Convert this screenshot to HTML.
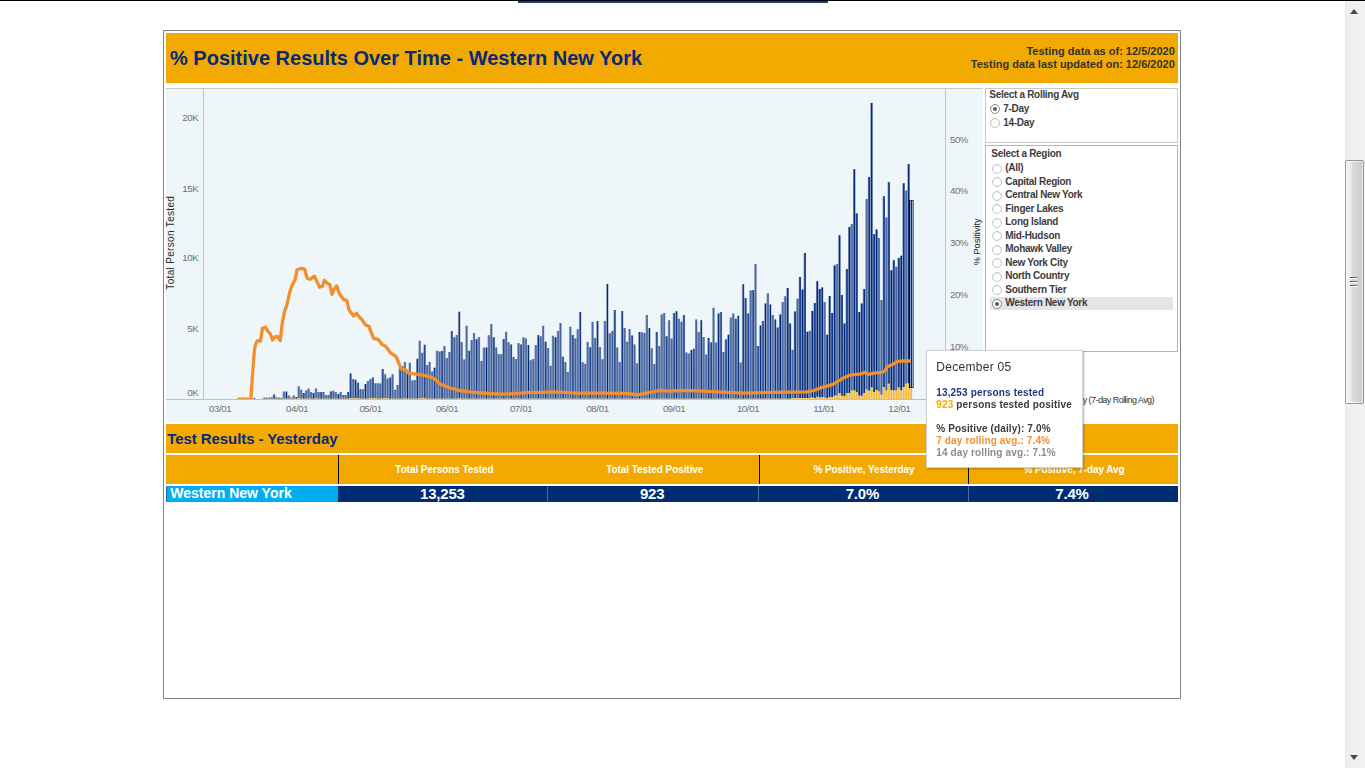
<!DOCTYPE html>
<html lang="en">
<head>
<meta charset="utf-8">
<title>% Positive Results Over Time - Western New York</title>
<style>
html,body{margin:0;padding:0;background:#fff;overflow:hidden;}
body{width:1365px;height:768px;position:relative;font-family:"Liberation Sans",Arial,Helvetica,sans-serif;color:#333;}
.abs{position:absolute;}
.t{position:absolute;white-space:nowrap;margin:0;padding:0;}
#topline{left:0;top:0;width:1365px;height:1px;background:#000;}
#topblue{left:518px;top:1px;width:310px;height:2px;background:#1f3a7a;}
#frame{left:163px;top:30px;width:1016px;height:667px;border:1px solid #848484;}
#hdr{left:166px;top:33px;width:1012px;height:50px;background:#f2a900;}
#chartbg{left:166px;top:88px;width:817px;height:334px;background:#eef6fa;}
#chartsvg{left:0;top:0;}
.panel{border:1px solid #c8c8c8;background:#fff;box-sizing:border-box;}
.radio{position:absolute;width:8px;height:8px;border:1px solid #c4c4c4;border-radius:50%;background:#fff;box-shadow:inset 0 1px 1px rgba(0,0,0,0.08);}
.radio.on{border-color:#8a8a8a;}
.radio.on:after{content:"";position:absolute;left:2px;top:2px;width:4px;height:4px;border-radius:50%;background:#5e5a55;}
#bar2{left:166px;top:424px;width:1012px;height:29px;background:#f2a900;}
#thead{left:166px;top:455px;width:1012px;height:29px;background:#f2a900;}
.vsep{position:absolute;top:455px;width:1px;height:29px;background:#000;}
#rowname{left:166px;top:486px;width:172px;height:16px;background:#00aeef;border-left:1px solid #1b6f9c;box-sizing:border-box;}
#rowvals{left:338px;top:486px;width:840px;height:16px;background:#002d72;}
.tsep{position:absolute;top:486px;width:1px;height:16px;background:#4f6597;}
#tiptext{position:absolute;left:0;top:0;width:1365px;height:768px;will-change:transform;}
#sb{left:1345px;top:1px;width:20px;height:767px;background:linear-gradient(to right,#e9e9e9 0,#efefef 2px,#f1f1f1 100%);}
#sbthumb{left:1345px;top:160px;width:19px;height:244px;box-sizing:border-box;border:1px solid #979797;border-radius:2px;background:linear-gradient(to right,#f6f6f6 0,#eeeeee 3px,#e6e6e6 6px,#d9dadc 6.5px,#d4d4d8 11px,#cbcbcf 16px,#d6d6da 17px);box-shadow:inset 0 0 0 1px rgba(255,255,255,0.55);}
.grip{position:absolute;left:1350px;width:8px;height:1px;background:linear-gradient(to right,#3f3f3f,#8f8f8f);box-shadow:0 1px 0 rgba(255,255,255,0.9);}
.arr{position:absolute;left:1350px;width:0;height:0;border-left:4.5px solid transparent;border-right:4.5px solid transparent;}
#tip{left:926px;top:350px;width:157px;height:118px;box-sizing:border-box;background:#fff;border:1px solid #d2d2d2;box-shadow:1px 1px 2px rgba(0,0,0,0.28);}
</style>
</head>
<body>
<div id="frame" class="abs"></div>
<div id="hdr" class="abs"></div>
<div class="t" style="top:44.02px;font-size:21px;line-height:27px;color:#07297a;font-weight:bold;left:169.50px;transform:scaleX(0.9524);transform-origin:0 50%;">% Positive Results Over Time - Western New York</div>
<div class="t" style="top:44.09px;font-size:11px;line-height:14px;color:#333;font-weight:bold;right:190.20px;text-align:right;">Testing data as of: 12/5/2020</div>
<div class="t" style="top:57.09px;font-size:11px;line-height:14px;color:#333;font-weight:bold;right:190.20px;text-align:right;">Testing data last updated on: 12/6/2020</div>

<div id="chartbg" class="abs"></div>
<svg id="chartsvg" class="abs" width="1365" height="768" viewBox="0 0 1365 768">
<g fill="#e8dcdc" fill-opacity="0.13"><rect x="204" y="119" width="741" height="1"/><rect x="204" y="189" width="741" height="1"/></g>
<g>
<path fill="#00297a" fill-opacity="0.47" d="M253.04 398.2h2.4V399.0h-2.4zM262.91 397.7h2.4V398.8h-2.4zM265.38 397.8h2.4V398.8h-2.4zM267.85 397.7h2.4V398.8h-2.4zM270.32 397.2h2.4V398.8h-2.4zM272.79 394.6h2.4V398.8h-2.4zM275.26 397.2h2.4V398.8h-2.4zM277.73 397.7h2.4V398.8h-2.4zM280.20 397.7h2.4V398.8h-2.4zM282.66 391.5h2.4V398.8h-2.4zM285.13 391.5h2.4V398.8h-2.4zM287.60 395.5h2.4V398.8h-2.4zM290.07 397.5h2.4V398.8h-2.4zM292.54 395.5h2.4V398.8h-2.4zM295.01 397.0h2.4V398.8h-2.4zM297.48 386.3h2.4V398.2h-2.4zM299.95 389.8h2.4V398.8h-2.4zM302.42 392.9h2.4V398.8h-2.4zM304.89 390.6h2.4V398.8h-2.4zM307.36 388.5h2.4V398.8h-2.4zM309.82 392.0h2.4V398.8h-2.4zM312.29 392.9h2.4V398.8h-2.4zM314.76 388.5h2.4V398.2h-2.4zM317.23 392.0h2.4V398.8h-2.4zM319.70 392.0h2.4V398.8h-2.4zM322.17 392.0h2.4V398.8h-2.4zM324.64 395.0h2.4V398.8h-2.4zM327.11 395.0h2.4V398.8h-2.4zM329.58 391.5h2.4V398.8h-2.4zM332.04 390.7h2.4V398.8h-2.4zM334.51 392.0h2.4V398.8h-2.4zM336.98 394.0h2.4V398.8h-2.4zM339.45 392.0h2.4V398.8h-2.4zM341.92 395.0h2.4V398.8h-2.4zM344.39 395.0h2.4V398.8h-2.4zM346.86 392.0h2.4V398.8h-2.4zM349.33 373.5h2.4V398.2h-2.4zM351.80 379.0h2.4V398.2h-2.4zM354.27 379.7h2.4V398.2h-2.4zM356.74 382.8h2.4V398.2h-2.4zM359.20 389.0h2.4V398.8h-2.4zM361.67 389.2h2.4V398.8h-2.4zM364.14 383.9h2.4V398.8h-2.4zM366.61 380.9h2.4V398.8h-2.4zM369.08 379.2h2.4V398.2h-2.4zM371.55 377.4h2.4V398.2h-2.4zM374.02 383.3h2.4V398.2h-2.4zM376.49 383.3h2.4V398.8h-2.4zM378.96 383.6h2.4V398.8h-2.4zM381.42 368.9h2.4V398.2h-2.4zM383.89 374.3h2.4V398.2h-2.4zM386.36 378.6h2.4V398.2h-2.4zM388.83 377.4h2.4V398.8h-2.4zM391.30 374.3h2.4V398.8h-2.4zM393.77 389.7h2.4V398.8h-2.4zM396.24 385.0h2.4V398.8h-2.4zM398.71 368.1h2.4V398.8h-2.4zM401.18 366.3h2.4V398.8h-2.4zM403.65 362.0h2.4V398.2h-2.4zM406.12 372.2h2.4V398.8h-2.4zM408.58 362.8h2.4V398.8h-2.4zM411.05 380.4h2.4V398.8h-2.4zM413.52 380.1h2.4V398.8h-2.4zM415.99 358.7h2.4V398.8h-2.4zM418.46 340.7h2.4V398.2h-2.4zM420.93 352.8h2.4V398.2h-2.4zM423.40 344.8h2.4V398.2h-2.4zM425.87 364.9h2.4V398.8h-2.4zM428.34 362.0h2.4V398.8h-2.4zM430.80 371.6h2.4V398.8h-2.4zM433.27 367.8h2.4V398.8h-2.4zM435.74 350.7h2.4V398.8h-2.4zM438.21 351.6h2.4V398.8h-2.4zM440.68 351.1h2.4V398.8h-2.4zM443.15 346.0h2.4V398.8h-2.4zM445.62 358.1h2.4V398.8h-2.4zM448.09 352.0h2.4V398.8h-2.4zM450.56 331.1h2.4V398.8h-2.4zM453.03 337.2h2.4V398.8h-2.4zM455.50 334.9h2.4V398.8h-2.4zM457.96 311.8h2.4V398.2h-2.4zM460.43 341.9h2.4V398.8h-2.4zM462.90 359.5h2.4V398.8h-2.4zM465.37 325.8h2.4V398.8h-2.4zM467.84 350.8h2.4V398.8h-2.4zM470.31 339.9h2.4V398.8h-2.4zM472.78 332.9h2.4V398.8h-2.4zM475.25 339.3h2.4V398.8h-2.4zM477.72 337.0h2.4V398.8h-2.4zM480.19 361.0h2.4V398.8h-2.4zM482.65 347.5h2.4V398.8h-2.4zM485.12 347.5h2.4V398.8h-2.4zM487.59 335.2h2.4V398.8h-2.4zM490.06 323.9h2.4V398.8h-2.4zM492.53 337.2h2.4V398.8h-2.4zM495.00 347.5h2.4V398.8h-2.4zM497.47 354.0h2.4V398.8h-2.4zM499.94 354.3h2.4V398.8h-2.4zM502.41 339.0h2.4V398.8h-2.4zM504.88 331.7h2.4V398.8h-2.4zM507.34 342.3h2.4V398.8h-2.4zM509.81 344.4h2.4V398.8h-2.4zM512.28 356.9h2.4V398.8h-2.4zM514.75 359.0h2.4V398.8h-2.4zM517.22 343.1h2.4V398.8h-2.4zM519.69 344.6h2.4V398.8h-2.4zM522.16 337.2h2.4V398.8h-2.4zM524.63 338.5h2.4V398.8h-2.4zM527.10 345.0h2.4V398.8h-2.4zM529.57 360.2h2.4V398.8h-2.4zM532.03 358.9h2.4V398.8h-2.4zM534.50 345.0h2.4V398.8h-2.4zM536.97 334.9h2.4V398.8h-2.4zM539.44 336.2h2.4V398.8h-2.4zM541.91 325.8h2.4V398.8h-2.4zM544.38 341.7h2.4V398.8h-2.4zM546.85 348.0h2.4V398.8h-2.4zM549.32 365.8h2.4V398.8h-2.4zM551.79 335.8h2.4V398.8h-2.4zM554.25 337.2h2.4V398.8h-2.4zM556.72 331.0h2.4V398.8h-2.4zM559.19 323.1h2.4V398.8h-2.4zM561.66 356.7h2.4V398.8h-2.4zM564.13 361.9h2.4V398.8h-2.4zM566.60 371.9h2.4V398.8h-2.4zM569.07 326.7h2.4V398.8h-2.4zM571.54 334.9h2.4V398.8h-2.4zM574.01 338.5h2.4V398.8h-2.4zM576.48 329.3h2.4V398.8h-2.4zM578.94 312.0h2.4V398.8h-2.4zM581.41 362.3h2.4V398.8h-2.4zM583.88 363.8h2.4V398.8h-2.4zM586.35 342.0h2.4V398.8h-2.4zM588.82 347.2h2.4V398.8h-2.4zM591.29 321.9h2.4V398.8h-2.4zM593.76 338.1h2.4V398.8h-2.4zM596.23 321.1h2.4V398.8h-2.4zM598.70 346.9h2.4V398.8h-2.4zM601.17 359.3h2.4V398.8h-2.4zM603.63 320.9h2.4V398.8h-2.4zM606.10 284.0h2.4V398.8h-2.4zM608.57 333.2h2.4V398.8h-2.4zM611.04 331.0h2.4V398.8h-2.4zM613.51 310.1h2.4V398.8h-2.4zM615.98 347.6h2.4V398.8h-2.4zM618.45 361.9h2.4V398.8h-2.4zM620.92 311.1h2.4V398.8h-2.4zM623.39 328.0h2.4V398.8h-2.4zM625.86 341.7h2.4V398.8h-2.4zM628.33 328.9h2.4V398.8h-2.4zM630.79 335.5h2.4V398.8h-2.4zM633.26 344.6h2.4V398.8h-2.4zM635.73 363.2h2.4V398.8h-2.4zM638.20 331.9h2.4V398.8h-2.4zM640.67 332.2h2.4V398.8h-2.4zM643.14 332.9h2.4V398.8h-2.4zM645.61 315.0h2.4V398.8h-2.4zM648.08 328.0h2.4V398.8h-2.4zM650.55 348.2h2.4V398.8h-2.4zM653.01 364.1h2.4V398.8h-2.4zM655.48 331.9h2.4V398.8h-2.4zM657.95 345.9h2.4V398.8h-2.4zM660.42 314.4h2.4V398.8h-2.4zM662.89 313.1h2.4V398.8h-2.4zM665.36 336.2h2.4V398.8h-2.4zM667.83 320.2h2.4V398.8h-2.4zM670.30 338.4h2.4V398.8h-2.4zM672.77 313.0h2.4V398.8h-2.4zM675.24 311.3h2.4V398.8h-2.4zM677.70 318.8h2.4V398.8h-2.4zM680.17 321.7h2.4V398.8h-2.4zM682.64 315.0h2.4V398.8h-2.4zM685.11 352.5h2.4V398.8h-2.4zM687.58 353.6h2.4V398.8h-2.4zM690.05 350.0h2.4V398.8h-2.4zM692.52 348.8h2.4V398.8h-2.4zM694.99 319.6h2.4V398.8h-2.4zM697.46 332.1h2.4V398.8h-2.4zM699.93 320.2h2.4V398.8h-2.4zM702.39 336.9h2.4V398.8h-2.4zM704.86 354.6h2.4V398.8h-2.4zM707.33 338.0h2.4V398.8h-2.4zM709.80 342.5h2.4V398.8h-2.4zM712.27 307.8h2.4V398.8h-2.4zM714.74 342.5h2.4V398.8h-2.4zM717.21 313.4h2.4V398.8h-2.4zM719.68 311.9h2.4V398.8h-2.4zM722.15 351.9h2.4V398.8h-2.4zM724.62 339.6h2.4V398.8h-2.4zM727.09 334.8h2.4V398.8h-2.4zM729.55 317.5h2.4V398.8h-2.4zM732.02 313.6h2.4V398.8h-2.4zM734.49 318.8h2.4V398.8h-2.4zM736.96 315.7h2.4V398.8h-2.4zM739.43 362.5h2.4V398.8h-2.4zM741.90 284.2h2.4V398.8h-2.4zM744.37 298.0h2.4V398.8h-2.4zM746.84 313.4h2.4V398.8h-2.4zM749.31 290.5h2.4V398.8h-2.4zM751.77 290.0h2.4V398.8h-2.4zM754.24 264.0h2.4V398.8h-2.4zM756.71 345.9h2.4V398.8h-2.4zM759.18 325.5h2.4V398.8h-2.4zM761.65 320.9h2.4V398.8h-2.4zM764.12 303.6h2.4V398.8h-2.4zM766.59 293.2h2.4V398.8h-2.4zM769.06 304.6h2.4V398.8h-2.4zM771.53 315.0h2.4V398.8h-2.4zM774.00 319.6h2.4V398.8h-2.4zM776.46 327.5h2.4V398.8h-2.4zM778.93 314.4h2.4V398.8h-2.4zM781.40 301.9h2.4V398.8h-2.4zM783.87 296.3h2.4V398.8h-2.4zM786.34 288.0h2.4V398.8h-2.4zM788.81 323.4h2.4V398.8h-2.4zM791.28 349.8h2.4V398.1h-2.4zM793.75 311.5h2.4V398.1h-2.4zM796.22 298.8h2.4V398.1h-2.4zM798.69 276.9h2.4V398.1h-2.4zM801.15 289.6h2.4V398.1h-2.4zM803.62 253.0h2.4V398.1h-2.4zM806.09 331.7h2.4V398.1h-2.4zM808.56 330.7h2.4V398.1h-2.4zM811.03 310.9h2.4V397.6h-2.4zM813.50 303.0h2.4V398.0h-2.4zM815.97 281.3h2.4V396.7h-2.4zM818.44 289.0h2.4V397.6h-2.4zM820.91 287.5h2.4V397.0h-2.4zM823.38 302.1h2.4V397.6h-2.4zM825.85 334.8h2.4V398.0h-2.4zM828.31 295.9h2.4V397.0h-2.4zM830.78 313.0h2.4V397.1h-2.4zM833.25 265.5h2.4V395.7h-2.4zM835.72 264.0h2.4V395.4h-2.4zM838.19 235.3h2.4V392.9h-2.4zM840.66 295.0h2.4V395.7h-2.4zM843.13 323.4h2.4V396.0h-2.4zM845.60 269.0h2.4V393.3h-2.4zM848.07 227.0h2.4V392.9h-2.4zM850.53 223.9h2.4V390.5h-2.4zM853.00 169.3h2.4V390.5h-2.4zM855.47 213.5h2.4V391.9h-2.4zM857.94 312.0h2.4V395.7h-2.4zM860.41 303.6h2.4V395.7h-2.4zM862.88 289.0h2.4V392.9h-2.4zM865.35 198.9h2.4V389.5h-2.4zM867.82 177.0h2.4V390.7h-2.4zM870.29 103.0h2.4V387.6h-2.4zM872.76 234.3h2.4V391.9h-2.4zM875.22 229.5h2.4V390.0h-2.4zM877.69 238.0h2.4V391.4h-2.4zM880.16 300.0h2.4V394.8h-2.4zM882.63 196.2h2.4V387.1h-2.4zM885.10 217.5h2.4V390.5h-2.4zM887.57 182.2h2.4V383.8h-2.4zM890.04 270.2h2.4V390.0h-2.4zM892.51 260.2h2.4V390.5h-2.4zM894.98 266.7h2.4V390.5h-2.4zM897.45 258.0h2.4V387.6h-2.4zM899.91 255.7h2.4V390.5h-2.4zM902.38 183.3h2.4V387.1h-2.4zM904.85 190.5h2.4V383.8h-2.4zM907.32 164.1h2.4V383.3h-2.4z"/>
<path fill="#00297a" fill-opacity="0.45" d="M271.12 397.2h1.2V398.8h-1.2zM276.06 397.2h1.2V398.8h-1.2zM281.00 397.7h1.2V398.8h-1.2zM283.46 391.5h1.2V398.8h-1.2zM288.40 395.5h1.2V398.8h-1.2zM290.87 397.5h1.2V398.8h-1.2zM293.34 395.5h1.2V398.8h-1.2zM298.28 386.3h1.2V398.2h-1.2zM300.75 389.8h1.2V398.8h-1.2zM305.69 390.6h1.2V398.8h-1.2zM308.15 388.5h1.2V398.8h-1.2zM310.62 392.0h1.2V398.8h-1.2zM315.56 388.5h1.2V398.2h-1.2zM318.03 392.0h1.2V398.8h-1.2zM322.97 392.0h1.2V398.8h-1.2zM325.44 395.0h1.2V398.8h-1.2zM327.91 395.0h1.2V398.8h-1.2zM332.84 390.7h1.2V398.8h-1.2zM335.31 392.0h1.2V398.8h-1.2zM340.25 392.0h1.2V398.8h-1.2zM342.72 395.0h1.2V398.8h-1.2zM345.19 395.0h1.2V398.8h-1.2zM352.60 379.0h1.2V398.2h-1.2zM360.00 389.0h1.2V398.8h-1.2zM362.47 389.2h1.2V398.8h-1.2zM367.41 380.9h1.2V398.8h-1.2zM369.88 379.2h1.2V398.2h-1.2zM374.82 383.3h1.2V398.2h-1.2zM377.29 383.3h1.2V398.8h-1.2zM379.76 383.6h1.2V398.8h-1.2zM384.69 374.3h1.2V398.2h-1.2zM387.16 378.6h1.2V398.2h-1.2zM392.10 374.3h1.2V398.8h-1.2zM394.57 389.7h1.2V398.8h-1.2zM397.04 385.0h1.2V398.8h-1.2zM401.98 366.3h1.2V398.8h-1.2zM404.45 362.0h1.2V398.2h-1.2zM409.38 362.8h1.2V398.8h-1.2zM411.85 380.4h1.2V398.8h-1.2zM414.32 380.1h1.2V398.8h-1.2zM419.26 340.7h1.2V398.2h-1.2zM421.73 352.8h1.2V398.2h-1.2zM426.67 364.9h1.2V398.8h-1.2zM429.14 362.0h1.2V398.8h-1.2zM431.60 371.6h1.2V398.8h-1.2zM436.54 350.7h1.2V398.8h-1.2zM439.01 351.6h1.2V398.8h-1.2zM443.95 346.0h1.2V398.8h-1.2zM446.42 358.1h1.2V398.8h-1.2zM448.89 352.0h1.2V398.8h-1.2zM453.83 337.2h1.2V398.8h-1.2zM456.29 334.9h1.2V398.8h-1.2zM461.23 341.9h1.2V398.8h-1.2zM463.70 359.5h1.2V398.8h-1.2zM466.17 325.8h1.2V398.8h-1.2zM471.11 339.9h1.2V398.8h-1.2zM473.58 332.9h1.2V398.8h-1.2zM478.52 337.0h1.2V398.8h-1.2zM480.98 361.0h1.2V398.8h-1.2zM483.45 347.5h1.2V398.8h-1.2zM488.39 335.2h1.2V398.8h-1.2zM490.86 323.9h1.2V398.8h-1.2zM495.80 347.5h1.2V398.8h-1.2zM498.27 354.0h1.2V398.8h-1.2zM500.74 354.3h1.2V398.8h-1.2zM505.67 331.7h1.2V398.8h-1.2zM508.14 342.3h1.2V398.8h-1.2zM513.08 356.9h1.2V398.8h-1.2zM515.55 359.0h1.2V398.8h-1.2zM518.02 343.1h1.2V398.8h-1.2zM522.96 337.2h1.2V398.8h-1.2zM525.43 338.5h1.2V398.8h-1.2zM530.37 360.2h1.2V398.8h-1.2zM532.83 358.9h1.2V398.8h-1.2zM535.30 345.0h1.2V398.8h-1.2zM540.24 336.2h1.2V398.8h-1.2zM542.71 325.8h1.2V398.8h-1.2zM547.65 348.0h1.2V398.8h-1.2zM550.12 365.8h1.2V398.8h-1.2zM552.59 335.8h1.2V398.8h-1.2zM557.52 331.0h1.2V398.8h-1.2zM559.99 323.1h1.2V398.8h-1.2zM564.93 361.9h1.2V398.8h-1.2zM567.40 371.9h1.2V398.8h-1.2zM569.87 326.7h1.2V398.8h-1.2zM574.81 338.5h1.2V398.8h-1.2zM577.28 329.3h1.2V398.8h-1.2zM582.21 362.3h1.2V398.8h-1.2zM584.68 363.8h1.2V398.8h-1.2zM587.15 342.0h1.2V398.8h-1.2zM592.09 321.9h1.2V398.8h-1.2zM594.56 338.1h1.2V398.8h-1.2zM599.50 346.9h1.2V398.8h-1.2zM601.97 359.3h1.2V398.8h-1.2zM604.43 320.9h1.2V398.8h-1.2zM609.37 333.2h1.2V398.8h-1.2zM611.84 331.0h1.2V398.8h-1.2zM616.78 347.6h1.2V398.8h-1.2zM619.25 361.9h1.2V398.8h-1.2zM624.19 328.0h1.2V398.8h-1.2zM626.66 341.7h1.2V398.8h-1.2zM629.12 328.9h1.2V398.8h-1.2zM634.06 344.6h1.2V398.8h-1.2zM636.53 363.2h1.2V398.8h-1.2zM641.47 332.2h1.2V398.8h-1.2zM643.94 332.9h1.2V398.8h-1.2zM646.41 315.0h1.2V398.8h-1.2zM651.35 348.2h1.2V398.8h-1.2zM653.81 364.1h1.2V398.8h-1.2zM658.75 345.9h1.2V398.8h-1.2zM661.22 314.4h1.2V398.8h-1.2zM663.69 313.1h1.2V398.8h-1.2zM668.63 320.2h1.2V398.8h-1.2zM671.10 338.4h1.2V398.8h-1.2zM678.50 318.8h1.2V398.8h-1.2zM680.97 321.7h1.2V398.8h-1.2zM685.91 352.5h1.2V398.8h-1.2zM688.38 353.6h1.2V398.8h-1.2zM695.79 319.6h1.2V398.8h-1.2zM698.26 332.1h1.2V398.8h-1.2zM703.19 336.9h1.2V398.8h-1.2zM705.66 354.6h1.2V398.8h-1.2zM713.07 307.8h1.2V398.8h-1.2zM715.54 342.5h1.2V398.8h-1.2zM722.95 351.9h1.2V398.8h-1.2zM730.35 317.5h1.2V398.8h-1.2zM732.82 313.6h1.2V398.8h-1.2zM740.23 362.5h1.2V398.8h-1.2zM750.11 290.5h1.2V398.8h-1.2zM755.04 264.0h1.2V398.8h-1.2zM767.39 293.2h1.2V398.8h-1.2zM772.33 315.0h1.2V398.8h-1.2zM782.20 301.9h1.2V398.8h-1.2zM784.67 296.3h1.2V398.8h-1.2zM792.08 349.8h1.2V398.1h-1.2zM797.02 298.8h1.2V398.1h-1.2zM809.36 330.7h1.2V398.1h-1.2zM824.18 302.1h1.2V397.6h-1.2zM836.52 264.0h1.2V395.4h-1.2zM851.33 223.9h1.2V390.5h-1.2zM866.15 198.9h1.2V389.5h-1.2zM878.49 238.0h1.2V391.4h-1.2zM880.96 300.0h1.2V394.8h-1.2zM885.90 217.5h1.2V390.5h-1.2zM895.78 266.7h1.2V390.5h-1.2zM905.65 190.5h1.2V383.8h-1.2z"/>
<path fill="#00297a" d="M253.94 398.2h1.0V399.0h-1.0zM263.81 397.7h1.0V398.8h-1.0zM266.28 397.8h1.0V398.8h-1.0zM268.75 397.7h1.0V398.8h-1.0zM273.69 394.6h1.0V398.8h-1.0zM278.63 397.7h1.0V398.8h-1.0zM286.03 391.5h1.0V398.8h-1.0zM295.91 397.0h1.0V398.8h-1.0zM303.32 392.9h1.0V398.8h-1.0zM313.19 392.9h1.0V398.8h-1.0zM320.60 392.0h1.0V398.8h-1.0zM330.48 391.5h1.0V398.8h-1.0zM337.88 394.0h1.0V398.8h-1.0zM347.76 392.0h1.0V398.8h-1.0zM350.23 373.5h1.0V398.2h-1.0zM355.17 379.7h1.0V398.2h-1.0zM357.63 382.8h1.0V398.2h-1.0zM365.04 383.9h1.0V398.8h-1.0zM372.45 377.4h1.0V398.2h-1.0zM382.32 368.9h1.0V398.2h-1.0zM389.73 377.4h1.0V398.8h-1.0zM399.61 368.1h1.0V398.8h-1.0zM407.01 372.2h1.0V398.8h-1.0zM416.89 358.7h1.0V398.8h-1.0zM424.30 344.8h1.0V398.2h-1.0zM434.17 367.8h1.0V398.8h-1.0zM441.58 351.1h1.0V398.8h-1.0zM451.46 331.1h1.0V398.8h-1.0zM458.86 311.8h1.0V398.2h-1.0zM468.74 350.8h1.0V398.8h-1.0zM476.15 339.3h1.0V398.8h-1.0zM486.02 347.5h1.0V398.8h-1.0zM493.43 337.2h1.0V398.8h-1.0zM503.31 339.0h1.0V398.8h-1.0zM510.71 344.4h1.0V398.8h-1.0zM520.59 344.6h1.0V398.8h-1.0zM528.00 345.0h1.0V398.8h-1.0zM537.87 334.9h1.0V398.8h-1.0zM545.28 341.7h1.0V398.8h-1.0zM555.15 337.2h1.0V398.8h-1.0zM562.56 356.7h1.0V398.8h-1.0zM572.44 334.9h1.0V398.8h-1.0zM579.84 312.0h1.0V398.8h-1.0zM589.72 347.2h1.0V398.8h-1.0zM597.13 321.1h1.0V398.8h-1.0zM607.00 284.0h1.0V398.8h-1.0zM614.41 310.1h1.0V398.8h-1.0zM621.82 311.1h1.0V398.8h-1.0zM631.69 335.5h1.0V398.8h-1.0zM639.10 331.9h1.0V398.8h-1.0zM648.98 328.0h1.0V398.8h-1.0zM656.38 331.9h1.0V398.8h-1.0zM666.26 336.2h1.0V398.8h-1.0zM673.67 313.0h1.0V398.8h-1.0zM676.14 311.3h1.0V398.8h-1.0zM683.54 315.0h1.0V398.8h-1.0zM690.95 350.0h1.0V398.8h-1.0zM693.42 348.8h1.0V398.8h-1.0zM700.83 320.2h1.0V398.8h-1.0zM708.23 338.0h1.0V398.8h-1.0zM710.70 342.5h1.0V398.8h-1.0zM718.11 313.4h1.0V398.8h-1.0zM720.58 311.9h1.0V398.8h-1.0zM725.52 339.6h1.0V398.8h-1.0zM727.99 334.8h1.0V398.8h-1.0zM735.39 318.8h1.0V398.8h-1.0zM737.86 315.7h1.0V398.8h-1.0zM742.80 284.2h1.0V398.8h-1.0zM745.27 298.0h1.0V398.8h-1.0zM747.74 313.4h1.0V398.8h-1.0zM752.67 290.0h1.0V398.8h-1.0zM757.61 345.9h1.0V398.8h-1.0zM760.08 325.5h1.0V398.8h-1.0zM762.55 320.9h1.0V398.8h-1.0zM765.02 303.6h1.0V398.8h-1.0zM769.96 304.6h1.0V398.8h-1.0zM774.90 319.6h1.0V398.8h-1.0zM777.36 327.5h1.0V398.8h-1.0zM779.66 314.4h1.35V398.8h-1.35zM787.07 288.0h1.35V398.8h-1.35zM789.53 323.4h1.35V398.8h-1.35zM794.47 311.5h1.35V398.1h-1.35zM799.41 276.9h1.35V398.1h-1.35zM801.88 289.6h1.35V398.1h-1.35zM804.35 253.0h1.35V398.1h-1.35zM806.82 331.7h1.35V398.1h-1.35zM811.76 310.9h1.35V397.6h-1.35zM814.23 303.0h1.35V398.0h-1.35zM816.69 281.3h1.35V396.7h-1.35zM819.16 289.0h1.35V397.6h-1.35zM821.63 287.5h1.35V397.0h-1.35zM826.57 334.8h1.35V398.0h-1.35zM829.04 295.9h1.35V397.0h-1.35zM831.51 313.0h1.35V397.1h-1.35zM833.98 265.5h1.35V395.7h-1.35zM838.92 235.3h1.35V392.9h-1.35zM841.38 295.0h1.35V395.7h-1.35zM843.85 323.4h1.35V396.0h-1.35zM846.32 269.0h1.35V393.3h-1.35zM848.79 227.0h1.35V392.9h-1.35zM853.73 169.3h1.35V390.5h-1.35zM856.20 213.5h1.35V391.9h-1.35zM858.67 312.0h1.35V395.7h-1.35zM861.14 303.6h1.35V395.7h-1.35zM863.60 289.0h1.35V392.9h-1.35zM868.54 177.0h1.35V390.7h-1.35zM871.01 103.0h1.35V387.6h-1.35zM873.48 234.3h1.35V391.9h-1.35zM875.95 229.5h1.35V390.0h-1.35zM883.36 196.2h1.35V387.1h-1.35zM888.29 182.2h1.35V383.8h-1.35zM890.76 270.2h1.35V390.0h-1.35zM893.23 260.2h1.35V390.5h-1.35zM898.17 258.0h1.35V387.6h-1.35zM900.64 255.7h1.35V390.5h-1.35zM903.11 183.3h1.35V387.1h-1.35zM908.05 164.1h1.35V383.3h-1.35z"/>
<path fill="#f5b429" fill-opacity="0.5" d="M262.91 398.8h2.4V399.0h-2.4zM265.38 398.8h2.4V399.0h-2.4zM267.85 398.8h2.4V399.0h-2.4zM270.32 398.8h2.4V399.0h-2.4zM272.79 398.8h2.4V399.0h-2.4zM275.26 398.8h2.4V399.0h-2.4zM277.73 398.8h2.4V399.0h-2.4zM280.20 398.8h2.4V399.0h-2.4zM282.66 398.8h2.4V399.0h-2.4zM285.13 398.8h2.4V399.0h-2.4zM287.60 398.8h2.4V399.0h-2.4zM290.07 398.8h2.4V399.0h-2.4zM292.54 398.8h2.4V399.0h-2.4zM295.01 398.8h2.4V399.0h-2.4zM297.48 398.2h2.4V399.0h-2.4zM299.95 398.8h2.4V399.0h-2.4zM302.42 398.8h2.4V399.0h-2.4zM304.89 398.8h2.4V399.0h-2.4zM307.36 398.8h2.4V399.0h-2.4zM309.82 398.8h2.4V399.0h-2.4zM312.29 398.8h2.4V399.0h-2.4zM314.76 398.2h2.4V399.0h-2.4zM317.23 398.8h2.4V399.0h-2.4zM319.70 398.8h2.4V399.0h-2.4zM322.17 398.8h2.4V399.0h-2.4zM324.64 398.8h2.4V399.0h-2.4zM327.11 398.8h2.4V399.0h-2.4zM329.58 398.8h2.4V399.0h-2.4zM332.04 398.8h2.4V399.0h-2.4zM334.51 398.8h2.4V399.0h-2.4zM336.98 398.8h2.4V399.0h-2.4zM339.45 398.8h2.4V399.0h-2.4zM341.92 398.8h2.4V399.0h-2.4zM344.39 398.8h2.4V399.0h-2.4zM346.86 398.8h2.4V399.0h-2.4zM349.33 398.2h2.4V399.0h-2.4zM351.80 398.2h2.4V399.0h-2.4zM354.27 398.2h2.4V399.0h-2.4zM356.74 398.2h2.4V399.0h-2.4zM359.20 398.8h2.4V399.0h-2.4zM361.67 398.8h2.4V399.0h-2.4zM364.14 398.8h2.4V399.0h-2.4zM366.61 398.8h2.4V399.0h-2.4zM369.08 398.2h2.4V399.0h-2.4zM371.55 398.2h2.4V399.0h-2.4zM374.02 398.2h2.4V399.0h-2.4zM376.49 398.8h2.4V399.0h-2.4zM378.96 398.8h2.4V399.0h-2.4zM381.42 398.2h2.4V399.0h-2.4zM383.89 398.2h2.4V399.0h-2.4zM386.36 398.2h2.4V399.0h-2.4zM388.83 398.8h2.4V399.0h-2.4zM391.30 398.8h2.4V399.0h-2.4zM393.77 398.8h2.4V399.0h-2.4zM396.24 398.8h2.4V399.0h-2.4zM398.71 398.8h2.4V399.0h-2.4zM401.18 398.8h2.4V399.0h-2.4zM403.65 398.2h2.4V399.0h-2.4zM406.12 398.8h2.4V399.0h-2.4zM408.58 398.8h2.4V399.0h-2.4zM411.05 398.8h2.4V399.0h-2.4zM413.52 398.8h2.4V399.0h-2.4zM415.99 398.8h2.4V399.0h-2.4zM418.46 398.2h2.4V399.0h-2.4zM420.93 398.2h2.4V399.0h-2.4zM423.40 398.2h2.4V399.0h-2.4zM425.87 398.8h2.4V399.0h-2.4zM428.34 398.8h2.4V399.0h-2.4zM430.80 398.8h2.4V399.0h-2.4zM433.27 398.8h2.4V399.0h-2.4zM435.74 398.8h2.4V399.0h-2.4zM438.21 398.8h2.4V399.0h-2.4zM440.68 398.8h2.4V399.0h-2.4zM443.15 398.8h2.4V399.0h-2.4zM445.62 398.8h2.4V399.0h-2.4zM448.09 398.8h2.4V399.0h-2.4zM450.56 398.8h2.4V399.0h-2.4zM453.03 398.8h2.4V399.0h-2.4zM455.50 398.8h2.4V399.0h-2.4zM457.96 398.2h2.4V399.0h-2.4zM460.43 398.8h2.4V399.0h-2.4zM462.90 398.8h2.4V399.0h-2.4zM465.37 398.8h2.4V399.0h-2.4zM467.84 398.8h2.4V399.0h-2.4zM470.31 398.8h2.4V399.0h-2.4zM472.78 398.8h2.4V399.0h-2.4zM475.25 398.8h2.4V399.0h-2.4zM477.72 398.8h2.4V399.0h-2.4zM480.19 398.8h2.4V399.0h-2.4zM482.65 398.8h2.4V399.0h-2.4zM485.12 398.8h2.4V399.0h-2.4zM487.59 398.8h2.4V399.0h-2.4zM490.06 398.8h2.4V399.0h-2.4zM492.53 398.8h2.4V399.0h-2.4zM495.00 398.8h2.4V399.0h-2.4zM497.47 398.8h2.4V399.0h-2.4zM499.94 398.8h2.4V399.0h-2.4zM502.41 398.8h2.4V399.0h-2.4zM504.88 398.8h2.4V399.0h-2.4zM507.34 398.8h2.4V399.0h-2.4zM509.81 398.8h2.4V399.0h-2.4zM512.28 398.8h2.4V399.0h-2.4zM514.75 398.8h2.4V399.0h-2.4zM517.22 398.8h2.4V399.0h-2.4zM519.69 398.8h2.4V399.0h-2.4zM522.16 398.8h2.4V399.0h-2.4zM524.63 398.8h2.4V399.0h-2.4zM527.10 398.8h2.4V399.0h-2.4zM529.57 398.8h2.4V399.0h-2.4zM532.03 398.8h2.4V399.0h-2.4zM534.50 398.8h2.4V399.0h-2.4zM536.97 398.8h2.4V399.0h-2.4zM539.44 398.8h2.4V399.0h-2.4zM541.91 398.8h2.4V399.0h-2.4zM544.38 398.8h2.4V399.0h-2.4zM546.85 398.8h2.4V399.0h-2.4zM549.32 398.8h2.4V399.0h-2.4zM551.79 398.8h2.4V399.0h-2.4zM554.25 398.8h2.4V399.0h-2.4zM556.72 398.8h2.4V399.0h-2.4zM559.19 398.8h2.4V399.0h-2.4zM561.66 398.8h2.4V399.0h-2.4zM564.13 398.8h2.4V399.0h-2.4zM566.60 398.8h2.4V399.0h-2.4zM569.07 398.8h2.4V399.0h-2.4zM571.54 398.8h2.4V399.0h-2.4zM574.01 398.8h2.4V399.0h-2.4zM576.48 398.8h2.4V399.0h-2.4zM578.94 398.8h2.4V399.0h-2.4zM581.41 398.8h2.4V399.0h-2.4zM583.88 398.8h2.4V399.0h-2.4zM586.35 398.8h2.4V399.0h-2.4zM588.82 398.8h2.4V399.0h-2.4zM591.29 398.8h2.4V399.0h-2.4zM593.76 398.8h2.4V399.0h-2.4zM596.23 398.8h2.4V399.0h-2.4zM598.70 398.8h2.4V399.0h-2.4zM601.17 398.8h2.4V399.0h-2.4zM603.63 398.8h2.4V399.0h-2.4zM606.10 398.8h2.4V399.0h-2.4zM608.57 398.8h2.4V399.0h-2.4zM611.04 398.8h2.4V399.0h-2.4zM613.51 398.8h2.4V399.0h-2.4zM615.98 398.8h2.4V399.0h-2.4zM618.45 398.8h2.4V399.0h-2.4zM620.92 398.8h2.4V399.0h-2.4zM623.39 398.8h2.4V399.0h-2.4zM625.86 398.8h2.4V399.0h-2.4zM628.33 398.8h2.4V399.0h-2.4zM630.79 398.8h2.4V399.0h-2.4zM633.26 398.8h2.4V399.0h-2.4zM635.73 398.8h2.4V399.0h-2.4zM638.20 398.8h2.4V399.0h-2.4zM640.67 398.8h2.4V399.0h-2.4zM643.14 398.8h2.4V399.0h-2.4zM645.61 398.8h2.4V399.0h-2.4zM648.08 398.8h2.4V399.0h-2.4zM650.55 398.8h2.4V399.0h-2.4zM653.01 398.8h2.4V399.0h-2.4zM655.48 398.8h2.4V399.0h-2.4zM657.95 398.8h2.4V399.0h-2.4zM660.42 398.8h2.4V399.0h-2.4zM662.89 398.8h2.4V399.0h-2.4zM665.36 398.8h2.4V399.0h-2.4zM667.83 398.8h2.4V399.0h-2.4zM670.30 398.8h2.4V399.0h-2.4zM672.77 398.8h2.4V399.0h-2.4zM675.24 398.8h2.4V399.0h-2.4zM677.70 398.8h2.4V399.0h-2.4zM680.17 398.8h2.4V399.0h-2.4zM682.64 398.8h2.4V399.0h-2.4zM685.11 398.8h2.4V399.0h-2.4zM687.58 398.8h2.4V399.0h-2.4zM690.05 398.8h2.4V399.0h-2.4zM692.52 398.8h2.4V399.0h-2.4zM694.99 398.8h2.4V399.0h-2.4zM697.46 398.8h2.4V399.0h-2.4zM699.93 398.8h2.4V399.0h-2.4zM702.39 398.8h2.4V399.0h-2.4zM704.86 398.8h2.4V399.0h-2.4zM707.33 398.8h2.4V399.0h-2.4zM709.80 398.8h2.4V399.0h-2.4zM712.27 398.8h2.4V399.0h-2.4zM714.74 398.8h2.4V399.0h-2.4zM717.21 398.8h2.4V399.0h-2.4zM719.68 398.8h2.4V399.0h-2.4zM722.15 398.8h2.4V399.0h-2.4zM724.62 398.8h2.4V399.0h-2.4zM727.09 398.8h2.4V399.0h-2.4zM729.55 398.8h2.4V399.0h-2.4zM732.02 398.8h2.4V399.0h-2.4zM734.49 398.8h2.4V399.0h-2.4zM736.96 398.8h2.4V399.0h-2.4zM739.43 398.8h2.4V399.0h-2.4zM741.90 398.8h2.4V399.0h-2.4zM744.37 398.8h2.4V399.0h-2.4zM746.84 398.8h2.4V399.0h-2.4zM749.31 398.8h2.4V399.0h-2.4zM751.77 398.8h2.4V399.0h-2.4zM754.24 398.8h2.4V399.0h-2.4zM756.71 398.8h2.4V399.0h-2.4zM759.18 398.8h2.4V399.0h-2.4zM761.65 398.8h2.4V399.0h-2.4zM764.12 398.8h2.4V399.0h-2.4zM766.59 398.8h2.4V399.0h-2.4zM769.06 398.8h2.4V399.0h-2.4zM771.53 398.8h2.4V399.0h-2.4zM774.00 398.8h2.4V399.0h-2.4zM776.46 398.8h2.4V399.0h-2.4zM778.93 398.8h2.4V399.0h-2.4zM781.40 398.8h2.4V399.0h-2.4zM783.87 398.8h2.4V399.0h-2.4zM786.34 398.8h2.4V399.0h-2.4zM788.81 398.8h2.4V399.0h-2.4zM791.28 398.1h2.4V399.0h-2.4zM793.75 398.1h2.4V399.0h-2.4zM796.22 398.1h2.4V399.0h-2.4zM798.69 398.1h2.4V399.0h-2.4zM801.15 398.1h2.4V399.0h-2.4zM803.62 398.1h2.4V399.0h-2.4zM806.09 398.1h2.4V399.0h-2.4zM808.56 398.1h2.4V399.0h-2.4zM811.03 397.6h2.4V399.0h-2.4zM813.50 398.0h2.4V399.0h-2.4zM815.97 396.7h2.4V399.0h-2.4zM818.44 397.6h2.4V399.0h-2.4zM820.91 397.0h2.4V399.0h-2.4zM823.38 397.6h2.4V399.0h-2.4zM825.85 398.0h2.4V399.0h-2.4zM828.31 397.0h2.4V399.0h-2.4zM830.78 397.1h2.4V399.0h-2.4zM833.25 395.7h2.4V399.0h-2.4zM835.72 395.4h2.4V399.0h-2.4zM838.19 392.9h2.4V399.0h-2.4zM840.66 395.7h2.4V399.0h-2.4zM843.13 396.0h2.4V399.0h-2.4zM845.60 393.3h2.4V399.0h-2.4zM848.07 392.9h2.4V399.0h-2.4zM850.53 390.5h2.4V399.0h-2.4zM853.00 390.5h2.4V399.0h-2.4zM855.47 391.9h2.4V399.0h-2.4zM857.94 395.7h2.4V399.0h-2.4zM860.41 395.7h2.4V399.0h-2.4zM862.88 392.9h2.4V399.0h-2.4zM865.35 389.5h2.4V399.0h-2.4zM867.82 390.7h2.4V399.0h-2.4zM870.29 387.6h2.4V399.0h-2.4zM872.76 391.9h2.4V399.0h-2.4zM875.22 390.0h2.4V399.0h-2.4zM877.69 391.4h2.4V399.0h-2.4zM880.16 394.8h2.4V399.0h-2.4zM882.63 387.1h2.4V399.0h-2.4zM885.10 390.5h2.4V399.0h-2.4zM887.57 383.8h2.4V399.0h-2.4zM890.04 390.0h2.4V399.0h-2.4zM892.51 390.5h2.4V399.0h-2.4zM894.98 390.5h2.4V399.0h-2.4zM897.45 387.6h2.4V399.0h-2.4zM899.91 390.5h2.4V399.0h-2.4zM902.38 387.1h2.4V399.0h-2.4zM904.85 383.8h2.4V399.0h-2.4zM907.32 383.3h2.4V399.0h-2.4zM909.79 387.5h2.4V399.0h-2.4z"/>
<path fill="#f5b429" fill-opacity="0.9" d="M263.71 398.8h1.2V399.0h-1.2zM266.18 398.8h1.2V399.0h-1.2zM268.65 398.8h1.2V399.0h-1.2zM271.12 398.8h1.2V399.0h-1.2zM273.59 398.8h1.2V399.0h-1.2zM276.06 398.8h1.2V399.0h-1.2zM278.53 398.8h1.2V399.0h-1.2zM281.00 398.8h1.2V399.0h-1.2zM283.46 398.8h1.2V399.0h-1.2zM285.93 398.8h1.2V399.0h-1.2zM288.40 398.8h1.2V399.0h-1.2zM290.87 398.8h1.2V399.0h-1.2zM293.34 398.8h1.2V399.0h-1.2zM295.81 398.8h1.2V399.0h-1.2zM298.28 398.2h1.2V399.0h-1.2zM300.75 398.8h1.2V399.0h-1.2zM303.22 398.8h1.2V399.0h-1.2zM305.69 398.8h1.2V399.0h-1.2zM308.15 398.8h1.2V399.0h-1.2zM310.62 398.8h1.2V399.0h-1.2zM313.09 398.8h1.2V399.0h-1.2zM315.56 398.2h1.2V399.0h-1.2zM318.03 398.8h1.2V399.0h-1.2zM320.50 398.8h1.2V399.0h-1.2zM322.97 398.8h1.2V399.0h-1.2zM325.44 398.8h1.2V399.0h-1.2zM327.91 398.8h1.2V399.0h-1.2zM330.38 398.8h1.2V399.0h-1.2zM332.84 398.8h1.2V399.0h-1.2zM335.31 398.8h1.2V399.0h-1.2zM337.78 398.8h1.2V399.0h-1.2zM340.25 398.8h1.2V399.0h-1.2zM342.72 398.8h1.2V399.0h-1.2zM345.19 398.8h1.2V399.0h-1.2zM347.66 398.8h1.2V399.0h-1.2zM350.13 398.2h1.2V399.0h-1.2zM352.60 398.2h1.2V399.0h-1.2zM355.07 398.2h1.2V399.0h-1.2zM357.53 398.2h1.2V399.0h-1.2zM360.00 398.8h1.2V399.0h-1.2zM362.47 398.8h1.2V399.0h-1.2zM364.94 398.8h1.2V399.0h-1.2zM367.41 398.8h1.2V399.0h-1.2zM369.88 398.2h1.2V399.0h-1.2zM372.35 398.2h1.2V399.0h-1.2zM374.82 398.2h1.2V399.0h-1.2zM377.29 398.8h1.2V399.0h-1.2zM379.76 398.8h1.2V399.0h-1.2zM382.22 398.2h1.2V399.0h-1.2zM384.69 398.2h1.2V399.0h-1.2zM387.16 398.2h1.2V399.0h-1.2zM389.63 398.8h1.2V399.0h-1.2zM392.10 398.8h1.2V399.0h-1.2zM394.57 398.8h1.2V399.0h-1.2zM397.04 398.8h1.2V399.0h-1.2zM399.51 398.8h1.2V399.0h-1.2zM401.98 398.8h1.2V399.0h-1.2zM404.45 398.2h1.2V399.0h-1.2zM406.91 398.8h1.2V399.0h-1.2zM409.38 398.8h1.2V399.0h-1.2zM411.85 398.8h1.2V399.0h-1.2zM414.32 398.8h1.2V399.0h-1.2zM416.79 398.8h1.2V399.0h-1.2zM419.26 398.2h1.2V399.0h-1.2zM421.73 398.2h1.2V399.0h-1.2zM424.20 398.2h1.2V399.0h-1.2zM426.67 398.8h1.2V399.0h-1.2zM429.14 398.8h1.2V399.0h-1.2zM431.60 398.8h1.2V399.0h-1.2zM434.07 398.8h1.2V399.0h-1.2zM436.54 398.8h1.2V399.0h-1.2zM439.01 398.8h1.2V399.0h-1.2zM441.48 398.8h1.2V399.0h-1.2zM443.95 398.8h1.2V399.0h-1.2zM446.42 398.8h1.2V399.0h-1.2zM448.89 398.8h1.2V399.0h-1.2zM451.36 398.8h1.2V399.0h-1.2zM453.83 398.8h1.2V399.0h-1.2zM456.29 398.8h1.2V399.0h-1.2zM458.76 398.2h1.2V399.0h-1.2zM461.23 398.8h1.2V399.0h-1.2zM463.70 398.8h1.2V399.0h-1.2zM466.17 398.8h1.2V399.0h-1.2zM468.64 398.8h1.2V399.0h-1.2zM471.11 398.8h1.2V399.0h-1.2zM473.58 398.8h1.2V399.0h-1.2zM476.05 398.8h1.2V399.0h-1.2zM478.52 398.8h1.2V399.0h-1.2zM480.98 398.8h1.2V399.0h-1.2zM483.45 398.8h1.2V399.0h-1.2zM485.92 398.8h1.2V399.0h-1.2zM488.39 398.8h1.2V399.0h-1.2zM490.86 398.8h1.2V399.0h-1.2zM493.33 398.8h1.2V399.0h-1.2zM495.80 398.8h1.2V399.0h-1.2zM498.27 398.8h1.2V399.0h-1.2zM500.74 398.8h1.2V399.0h-1.2zM503.21 398.8h1.2V399.0h-1.2zM505.67 398.8h1.2V399.0h-1.2zM508.14 398.8h1.2V399.0h-1.2zM510.61 398.8h1.2V399.0h-1.2zM513.08 398.8h1.2V399.0h-1.2zM515.55 398.8h1.2V399.0h-1.2zM518.02 398.8h1.2V399.0h-1.2zM520.49 398.8h1.2V399.0h-1.2zM522.96 398.8h1.2V399.0h-1.2zM525.43 398.8h1.2V399.0h-1.2zM527.90 398.8h1.2V399.0h-1.2zM530.37 398.8h1.2V399.0h-1.2zM532.83 398.8h1.2V399.0h-1.2zM535.30 398.8h1.2V399.0h-1.2zM537.77 398.8h1.2V399.0h-1.2zM540.24 398.8h1.2V399.0h-1.2zM542.71 398.8h1.2V399.0h-1.2zM545.18 398.8h1.2V399.0h-1.2zM547.65 398.8h1.2V399.0h-1.2zM550.12 398.8h1.2V399.0h-1.2zM552.59 398.8h1.2V399.0h-1.2zM555.05 398.8h1.2V399.0h-1.2zM557.52 398.8h1.2V399.0h-1.2zM559.99 398.8h1.2V399.0h-1.2zM562.46 398.8h1.2V399.0h-1.2zM564.93 398.8h1.2V399.0h-1.2zM567.40 398.8h1.2V399.0h-1.2zM569.87 398.8h1.2V399.0h-1.2zM572.34 398.8h1.2V399.0h-1.2zM574.81 398.8h1.2V399.0h-1.2zM577.28 398.8h1.2V399.0h-1.2zM579.74 398.8h1.2V399.0h-1.2zM582.21 398.8h1.2V399.0h-1.2zM584.68 398.8h1.2V399.0h-1.2zM587.15 398.8h1.2V399.0h-1.2zM589.62 398.8h1.2V399.0h-1.2zM592.09 398.8h1.2V399.0h-1.2zM594.56 398.8h1.2V399.0h-1.2zM597.03 398.8h1.2V399.0h-1.2zM599.50 398.8h1.2V399.0h-1.2zM601.97 398.8h1.2V399.0h-1.2zM604.43 398.8h1.2V399.0h-1.2zM606.90 398.8h1.2V399.0h-1.2zM609.37 398.8h1.2V399.0h-1.2zM611.84 398.8h1.2V399.0h-1.2zM614.31 398.8h1.2V399.0h-1.2zM616.78 398.8h1.2V399.0h-1.2zM619.25 398.8h1.2V399.0h-1.2zM621.72 398.8h1.2V399.0h-1.2zM624.19 398.8h1.2V399.0h-1.2zM626.66 398.8h1.2V399.0h-1.2zM629.12 398.8h1.2V399.0h-1.2zM631.59 398.8h1.2V399.0h-1.2zM634.06 398.8h1.2V399.0h-1.2zM636.53 398.8h1.2V399.0h-1.2zM639.00 398.8h1.2V399.0h-1.2zM641.47 398.8h1.2V399.0h-1.2zM643.94 398.8h1.2V399.0h-1.2zM646.41 398.8h1.2V399.0h-1.2zM648.88 398.8h1.2V399.0h-1.2zM651.35 398.8h1.2V399.0h-1.2zM653.81 398.8h1.2V399.0h-1.2zM656.28 398.8h1.2V399.0h-1.2zM658.75 398.8h1.2V399.0h-1.2zM661.22 398.8h1.2V399.0h-1.2zM663.69 398.8h1.2V399.0h-1.2zM666.16 398.8h1.2V399.0h-1.2zM668.63 398.8h1.2V399.0h-1.2zM671.10 398.8h1.2V399.0h-1.2zM673.57 398.8h1.2V399.0h-1.2zM676.04 398.8h1.2V399.0h-1.2zM678.50 398.8h1.2V399.0h-1.2zM680.97 398.8h1.2V399.0h-1.2zM683.44 398.8h1.2V399.0h-1.2zM685.91 398.8h1.2V399.0h-1.2zM688.38 398.8h1.2V399.0h-1.2zM690.85 398.8h1.2V399.0h-1.2zM693.32 398.8h1.2V399.0h-1.2zM695.79 398.8h1.2V399.0h-1.2zM698.26 398.8h1.2V399.0h-1.2zM700.73 398.8h1.2V399.0h-1.2zM703.19 398.8h1.2V399.0h-1.2zM705.66 398.8h1.2V399.0h-1.2zM708.13 398.8h1.2V399.0h-1.2zM710.60 398.8h1.2V399.0h-1.2zM713.07 398.8h1.2V399.0h-1.2zM715.54 398.8h1.2V399.0h-1.2zM718.01 398.8h1.2V399.0h-1.2zM720.48 398.8h1.2V399.0h-1.2zM722.95 398.8h1.2V399.0h-1.2zM725.42 398.8h1.2V399.0h-1.2zM727.88 398.8h1.2V399.0h-1.2zM730.35 398.8h1.2V399.0h-1.2zM732.82 398.8h1.2V399.0h-1.2zM735.29 398.8h1.2V399.0h-1.2zM737.76 398.8h1.2V399.0h-1.2zM740.23 398.8h1.2V399.0h-1.2zM742.70 398.8h1.2V399.0h-1.2zM745.17 398.8h1.2V399.0h-1.2zM747.64 398.8h1.2V399.0h-1.2zM750.11 398.8h1.2V399.0h-1.2zM752.57 398.8h1.2V399.0h-1.2zM755.04 398.8h1.2V399.0h-1.2zM757.51 398.8h1.2V399.0h-1.2zM759.98 398.8h1.2V399.0h-1.2zM762.45 398.8h1.2V399.0h-1.2zM764.92 398.8h1.2V399.0h-1.2zM767.39 398.8h1.2V399.0h-1.2zM769.86 398.8h1.2V399.0h-1.2zM772.33 398.8h1.2V399.0h-1.2zM774.80 398.8h1.2V399.0h-1.2zM777.26 398.8h1.2V399.0h-1.2zM779.73 398.8h1.2V399.0h-1.2zM782.20 398.8h1.2V399.0h-1.2zM784.67 398.8h1.2V399.0h-1.2zM787.14 398.8h1.2V399.0h-1.2zM789.61 398.8h1.2V399.0h-1.2zM792.08 398.1h1.2V399.0h-1.2zM794.55 398.1h1.2V399.0h-1.2zM797.02 398.1h1.2V399.0h-1.2zM799.49 398.1h1.2V399.0h-1.2zM801.95 398.1h1.2V399.0h-1.2zM804.42 398.1h1.2V399.0h-1.2zM806.89 398.1h1.2V399.0h-1.2zM809.36 398.1h1.2V399.0h-1.2zM811.83 397.6h1.2V399.0h-1.2zM814.30 398.0h1.2V399.0h-1.2zM816.77 396.7h1.2V399.0h-1.2zM819.24 397.6h1.2V399.0h-1.2zM821.71 397.0h1.2V399.0h-1.2zM824.18 397.6h1.2V399.0h-1.2zM826.64 398.0h1.2V399.0h-1.2zM829.11 397.0h1.2V399.0h-1.2zM831.58 397.1h1.2V399.0h-1.2zM834.05 395.7h1.2V399.0h-1.2zM836.52 395.4h1.2V399.0h-1.2zM838.99 392.9h1.2V399.0h-1.2zM841.46 395.7h1.2V399.0h-1.2zM843.93 396.0h1.2V399.0h-1.2zM846.40 393.3h1.2V399.0h-1.2zM848.87 392.9h1.2V399.0h-1.2zM851.33 390.5h1.2V399.0h-1.2zM853.80 390.5h1.2V399.0h-1.2zM856.27 391.9h1.2V399.0h-1.2zM858.74 395.7h1.2V399.0h-1.2zM861.21 395.7h1.2V399.0h-1.2zM863.68 392.9h1.2V399.0h-1.2zM866.15 389.5h1.2V399.0h-1.2zM868.62 390.7h1.2V399.0h-1.2zM871.09 387.6h1.2V399.0h-1.2zM873.56 391.9h1.2V399.0h-1.2zM876.02 390.0h1.2V399.0h-1.2zM878.49 391.4h1.2V399.0h-1.2zM880.96 394.8h1.2V399.0h-1.2zM883.43 387.1h1.2V399.0h-1.2zM885.90 390.5h1.2V399.0h-1.2zM888.37 383.8h1.2V399.0h-1.2zM890.84 390.0h1.2V399.0h-1.2zM893.31 390.5h1.2V399.0h-1.2zM895.78 390.5h1.2V399.0h-1.2zM898.25 387.6h1.2V399.0h-1.2zM900.71 390.5h1.2V399.0h-1.2zM903.18 387.1h1.2V399.0h-1.2zM905.65 383.8h1.2V399.0h-1.2zM908.12 383.3h1.2V399.0h-1.2zM910.59 387.5h1.2V399.0h-1.2z"/>
<rect x="910" y="200.5" width="3" height="187.0" fill="#00297a" fill-opacity="0.4"/>
<rect x="911" y="200.5" width="1" height="187.0" fill="#00297a"/>
<defs><linearGradient id="sg" x1="0" x2="1" y1="0" y2="0"><stop offset="0" stop-color="#000"/><stop offset="0.3" stop-color="#222"/><stop offset="1" stop-color="#777"/></linearGradient></defs>
<rect x="909" y="200.0" width="1" height="188.0" fill="#0a0a0a"/>
<rect x="913" y="200.0" width="1" height="188.0" fill="#777"/>
<rect x="909" y="200.0" width="5" height="1" fill="url(#sg)"/>
<rect x="909" y="387.0" width="5" height="1" fill="url(#sg)"/>
<clipPath id="cp"><rect x="204" y="89" width="741" height="310.3"/></clipPath>
<polyline clip-path="url(#cp)" points="237.4,399.2 250.9,399.2 252.2,380.0 253.6,360.0 254.7,348.0 255.8,343.6 257.6,340.7 260.5,341.2 262.5,328.3 265.2,327.2 268.1,331.3 270.5,334.2 272.6,340.1 275.2,336.8 277.5,336.5 280.2,340.7 282.2,323.7 284.5,311.3 286.9,304.9 289.8,292.0 292.2,285.0 294.9,280.3 297.1,269.7 301.5,268.3 304.7,269.1 307.1,278.2 310.0,279.3 314.4,276.2 317.4,282.6 319.7,287.3 322.6,286.1 324.4,280.3 327.3,283.2 329.7,284.4 332.0,294.3 334.4,288.7 336.7,285.9 339.4,293.8 343.7,299.6 346.7,300.4 349.0,309.6 351.4,313.1 353.7,316.0 356.6,313.3 359.0,316.6 361.9,319.5 365.4,324.8 369.0,326.6 373.6,338.3 378.3,339.5 381.9,344.2 385.4,345.9 390.5,352.8 396.3,356.9 401.0,368.6 405.1,369.8 408.7,373.3 415.1,373.9 425.6,375.6 433.3,378.0 440.9,384.4 450.3,388.0 459.6,390.7 471.4,392.1 489.0,393.5 500.7,394.2 510.0,393.8 527.0,392.7 558.0,391.8 575.0,393.1 603.7,393.1 627.0,393.5 637.6,394.8 649.0,392.7 659.7,390.5 670.0,391.1 685.0,390.4 712.0,391.7 743.0,393.1 785.0,392.1 807.0,391.9 813.8,390.5 821.4,387.6 832.9,384.3 843.3,378.1 851.0,374.8 861.4,373.8 865.2,372.4 868.1,374.3 875.7,372.9 882.4,372.4 885.2,370.5 887.1,366.7 892.9,364.3 897.6,361.4 904.3,361.0 910.5,361.0" fill="none" stroke="#f28e2b" stroke-width="3.3" stroke-linejoin="round" stroke-linecap="butt"/>
</g>
<rect x="166" y="88" width="817" height="1" fill="#c9c9c9"/>
<rect x="203" y="88" width="1" height="312" fill="#c4c4c4"/>
<rect x="945" y="88" width="1" height="312" fill="#c4c4c4"/>
<rect x="166" y="399" width="780" height="1" fill="#c0c0c0"/>
<g font-family="Liberation Sans, Arial, sans-serif" font-size="10" fill="#333">
<text transform="translate(174,242.7) rotate(-90)" text-anchor="middle" font-size="10" letter-spacing="0.33" fill="#2a2a2a">Total Person Tested</text>
<text transform="translate(979.6,241.8) rotate(-90)" text-anchor="middle" font-size="9.2" fill="#222">% Positivity</text>
</g>
</svg>
<div class="t" style="top:111.14px;font-size:9.7px;line-height:13px;color:#707070;letter-spacing:-0.4px;right:1166.60px;text-align:right;">20K</div>
<div class="t" style="top:182.14px;font-size:9.7px;line-height:13px;color:#707070;letter-spacing:-0.4px;right:1166.60px;text-align:right;">15K</div>
<div class="t" style="top:251.14px;font-size:9.7px;line-height:13px;color:#707070;letter-spacing:-0.4px;right:1166.60px;text-align:right;">10K</div>
<div class="t" style="top:322.14px;font-size:9.7px;line-height:13px;color:#707070;letter-spacing:-0.4px;right:1166.60px;text-align:right;">5K</div>
<div class="t" style="top:386.14px;font-size:9.7px;line-height:13px;color:#707070;letter-spacing:-0.4px;right:1166.60px;text-align:right;">0K</div>
<div class="t" style="top:132.64px;font-size:9.7px;line-height:13px;color:#707070;letter-spacing:-0.5px;left:950.00px;">50%</div>
<div class="t" style="top:184.44px;font-size:9.7px;line-height:13px;color:#707070;letter-spacing:-0.5px;left:950.00px;">40%</div>
<div class="t" style="top:236.14px;font-size:9.7px;line-height:13px;color:#707070;letter-spacing:-0.5px;left:950.00px;">30%</div>
<div class="t" style="top:288.14px;font-size:9.7px;line-height:13px;color:#707070;letter-spacing:-0.5px;left:950.00px;">20%</div>
<div class="t" style="top:339.94px;font-size:9.7px;line-height:13px;color:#707070;letter-spacing:-0.5px;left:950.00px;">10%</div>
<div class="t" style="top:402.14px;font-size:9.7px;line-height:13px;color:#707070;letter-spacing:-0.4px;left:20.20px;width:400px;text-align:center;">03/01</div>
<div class="t" style="top:402.14px;font-size:9.7px;line-height:13px;color:#707070;letter-spacing:-0.4px;left:97.10px;width:400px;text-align:center;">04/01</div>
<div class="t" style="top:402.14px;font-size:9.7px;line-height:13px;color:#707070;letter-spacing:-0.4px;left:170.50px;width:400px;text-align:center;">05/01</div>
<div class="t" style="top:402.14px;font-size:9.7px;line-height:13px;color:#707070;letter-spacing:-0.4px;left:247.00px;width:400px;text-align:center;">06/01</div>
<div class="t" style="top:402.14px;font-size:9.7px;line-height:13px;color:#707070;letter-spacing:-0.4px;left:321.00px;width:400px;text-align:center;">07/01</div>
<div class="t" style="top:402.14px;font-size:9.7px;line-height:13px;color:#707070;letter-spacing:-0.4px;left:397.50px;width:400px;text-align:center;">08/01</div>
<div class="t" style="top:402.14px;font-size:9.7px;line-height:13px;color:#707070;letter-spacing:-0.4px;left:474.00px;width:400px;text-align:center;">09/01</div>
<div class="t" style="top:402.14px;font-size:9.7px;line-height:13px;color:#707070;letter-spacing:-0.4px;left:548.00px;width:400px;text-align:center;">10/01</div>
<div class="t" style="top:402.14px;font-size:9.7px;line-height:13px;color:#707070;letter-spacing:-0.4px;left:624.00px;width:400px;text-align:center;">11/01</div>
<div class="t" style="top:402.14px;font-size:9.7px;line-height:13px;color:#707070;letter-spacing:-0.4px;left:699.30px;width:400px;text-align:center;">12/01</div>

<!-- filter panels -->
<div class="abs panel" style="left:985px;top:88px;width:193px;height:55px;"></div>
<div class="abs panel" style="left:985px;top:145px;width:193px;height:207px;border-color:#b4b4b4;"></div>
<div class="abs" style="left:990px;top:297px;width:183px;height:13px;background:#e5e5e5;"></div>
<div class="radio on" style="left:990px;top:103.5px;"></div>
<div class="radio" style="left:990px;top:117.5px;"></div>
<div class="radio" style="left:992px;top:163.5px;"></div>
<div class="radio" style="left:992px;top:177.0px;"></div>
<div class="radio" style="left:992px;top:190.5px;"></div>
<div class="radio" style="left:992px;top:204.0px;"></div>
<div class="radio" style="left:992px;top:217.5px;"></div>
<div class="radio" style="left:992px;top:231.0px;"></div>
<div class="radio" style="left:992px;top:244.5px;"></div>
<div class="radio" style="left:992px;top:258.0px;"></div>
<div class="radio" style="left:992px;top:271.5px;"></div>
<div class="radio" style="left:992px;top:285.0px;"></div>
<div class="radio on" style="left:992px;top:298.5px;"></div>
<div class="t" style="top:87.83px;font-size:10px;line-height:13px;color:#3c3c3c;font-weight:bold;letter-spacing:-0.3px;left:989.30px;">Select a Rolling Avg</div>
<div class="t" style="top:101.73px;font-size:10px;line-height:13px;color:#3c3c3c;font-weight:bold;letter-spacing:-0.3px;left:1003.30px;">7-Day</div>
<div class="t" style="top:115.63px;font-size:10px;line-height:13px;color:#3c3c3c;font-weight:bold;letter-spacing:-0.3px;left:1003.30px;">14-Day</div>
<div class="t" style="top:146.84px;font-size:10px;line-height:13px;color:#3c3c3c;font-weight:bold;letter-spacing:-0.3px;left:991.30px;">Select a Region</div>
<div class="t" style="top:161.03px;font-size:10px;line-height:13px;color:#3c3c3c;font-weight:bold;letter-spacing:-0.3px;left:1005.30px;">(All)</div>
<div class="t" style="top:174.53px;font-size:10px;line-height:13px;color:#3c3c3c;font-weight:bold;letter-spacing:-0.3px;left:1005.30px;">Capital Region</div>
<div class="t" style="top:188.03px;font-size:10px;line-height:13px;color:#3c3c3c;font-weight:bold;letter-spacing:-0.3px;left:1005.30px;">Central New York</div>
<div class="t" style="top:201.53px;font-size:10px;line-height:13px;color:#3c3c3c;font-weight:bold;letter-spacing:-0.3px;left:1005.30px;">Finger Lakes</div>
<div class="t" style="top:215.03px;font-size:10px;line-height:13px;color:#3c3c3c;font-weight:bold;letter-spacing:-0.3px;left:1005.30px;">Long Island</div>
<div class="t" style="top:228.53px;font-size:10px;line-height:13px;color:#3c3c3c;font-weight:bold;letter-spacing:-0.3px;left:1005.30px;">Mid-Hudson</div>
<div class="t" style="top:242.03px;font-size:10px;line-height:13px;color:#3c3c3c;font-weight:bold;letter-spacing:-0.3px;left:1005.30px;">Mohawk Valley</div>
<div class="t" style="top:255.53px;font-size:10px;line-height:13px;color:#3c3c3c;font-weight:bold;letter-spacing:-0.3px;left:1005.30px;">New York City</div>
<div class="t" style="top:269.04px;font-size:10px;line-height:13px;color:#3c3c3c;font-weight:bold;letter-spacing:-0.3px;left:1005.30px;">North Country</div>
<div class="t" style="top:282.54px;font-size:10px;line-height:13px;color:#3c3c3c;font-weight:bold;letter-spacing:-0.3px;left:1005.30px;">Southern Tier</div>
<div class="t" style="top:296.04px;font-size:10px;line-height:13px;color:#3c3c3c;font-weight:bold;letter-spacing:-0.3px;left:1005.30px;">Western New York</div>

<!-- legend (mostly hidden behind tooltip) -->
<div class="t" style="right:211px;top:394px;font-size:9px;line-height:12px;color:#333;letter-spacing:-0.55px;text-align:right;">% Positivity (7-day Rolling Avg)</div>

<!-- table -->
<div id="bar2" class="abs"></div>
<div id="thead" class="abs"></div>
<div class="vsep" style="left:338px;"></div>
<div class="vsep" style="left:759px;"></div>
<div class="vsep" style="left:968px;"></div>
<div id="rowname" class="abs"></div>
<div id="rowvals" class="abs"></div>
<div class="tsep" style="left:547px;"></div>
<div class="tsep" style="left:758px;"></div>
<div class="tsep" style="left:968px;"></div>
<div class="t" style="top:428.90px;font-size:15px;line-height:20px;color:#07297a;font-weight:bold;letter-spacing:-0.08px;left:167.30px;">Test Results - Yesterday</div>
<div class="t" style="top:462.64px;font-size:10px;line-height:13px;color:#fff;font-weight:bold;letter-spacing:-0.07px;left:244.50px;width:400px;text-align:center;">Total Persons Tested</div>
<div class="t" style="top:462.64px;font-size:10px;line-height:13px;color:#fff;font-weight:bold;letter-spacing:-0.07px;left:454.80px;width:400px;text-align:center;">Total Tested Positive</div>
<div class="t" style="top:462.64px;font-size:10px;line-height:13px;color:#fff;font-weight:bold;letter-spacing:-0.07px;left:664.00px;width:400px;text-align:center;">% Positive, Yesterday</div>
<div class="t" style="top:462.64px;font-size:10px;line-height:13px;color:#fff;font-weight:bold;letter-spacing:-0.07px;left:874.00px;width:400px;text-align:center;">% Positive, 7-day Avg</div>
<div class="t" style="top:483.95px;font-size:14px;line-height:18px;color:#fff;font-weight:bold;left:170.30px;">Western New York</div>
<div class="t" style="top:483.60px;font-size:15px;line-height:20px;color:#fff;font-weight:bold;letter-spacing:-0.2px;left:242.40px;width:400px;text-align:center;">13,253</div>
<div class="t" style="top:483.60px;font-size:15px;line-height:20px;color:#fff;font-weight:bold;letter-spacing:-0.2px;left:452.20px;width:400px;text-align:center;">923</div>
<div class="t" style="top:483.60px;font-size:15px;line-height:20px;color:#fff;font-weight:bold;letter-spacing:-0.2px;left:662.40px;width:400px;text-align:center;">7.0%</div>
<div class="t" style="top:483.60px;font-size:15px;line-height:20px;color:#fff;font-weight:bold;letter-spacing:-0.2px;left:872.00px;width:400px;text-align:center;">7.4%</div>

<!-- tooltip -->
<div id="tip" class="abs"></div>
<div id="tiptext"><div class="t" style="top:358.74px;font-size:12px;line-height:16px;color:#333;letter-spacing:0.3px;left:936.20px;">December 05</div>
<div class="t" style="top:386.04px;font-size:10px;line-height:13px;color:#1f3a7a;font-weight:bold;letter-spacing:0.17px;left:936.20px;">13,253 persons tested</div>
<div class="t" style="top:398.34px;font-size:10px;line-height:13px;color:#3a3a3a;font-weight:bold;letter-spacing:0.17px;left:936.20px;"><span style="color:#f2a900">923</span> persons tested positive</div>
<div class="t" style="top:421.84px;font-size:10px;line-height:13px;color:#3a3a3a;font-weight:bold;letter-spacing:0.14px;left:936.20px;">% Positive (daily): 7.0%</div>
<div class="t" style="top:433.94px;font-size:10px;line-height:13px;color:#f28e2b;font-weight:bold;letter-spacing:0.14px;left:936.20px;">7 day rolling avg.: 7.4%</div>
<div class="t" style="top:446.24px;font-size:10px;line-height:13px;color:#8c8c8c;font-weight:bold;letter-spacing:0.14px;left:936.20px;">14 day rolling avg.: 7.1%</div></div>

<!-- page chrome -->
<div id="sb" class="abs"></div>
<div id="sbthumb" class="abs"></div>
<div class="grip" style="top:277px;"></div>
<div class="grip" style="top:281px;"></div>
<div class="grip" style="top:285px;"></div>
<div class="arr" style="top:9px;border-bottom:5px solid #4a4a4a;"></div>
<div class="arr" style="top:755px;border-top:5px solid #4a4a4a;"></div>
<div id="topline" class="abs"></div>
<div id="topblue" class="abs"></div>
</body>
</html>
